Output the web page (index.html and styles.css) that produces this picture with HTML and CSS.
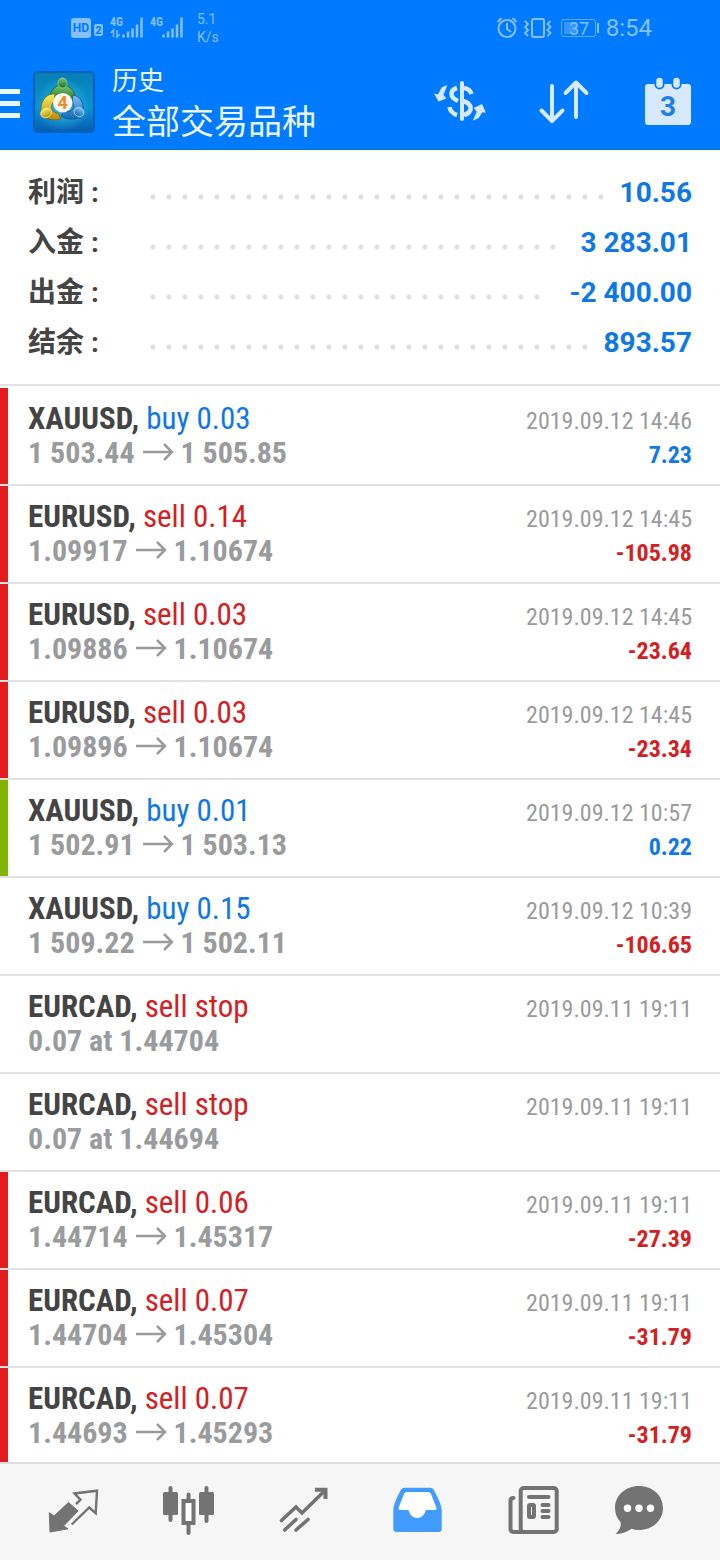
FILE: index.html
```html
<!DOCTYPE html>
<html lang="zh-CN">
<head>
<meta charset="utf-8">
<meta name="viewport" content="width=device-width, initial-scale=1">
<title>历史</title>
<link rel="stylesheet" href="styles.css">
</head>
<body>
<header class="header">
  <div class="status">
    <svg class="status-signal" width="116" height="32" viewBox="0 0 116 32" aria-hidden="true">
      <rect x="1" y="6" width="20" height="20" rx="3" fill="currentColor"/>
      <text x="11" y="20" class="hd">HD</text>
      <rect x="24" y="12" width="9" height="12" rx="2" fill="currentColor"/>
      <text x="28.500" y="22" class="sim">2</text>
      <text x="40" y="14" class="net">4G</text>
      <path d="M43.500 25v-7l-2.500 3M47 18v7l3-3" fill="none" stroke="currentColor" stroke-width="1.500"/>
      <path d="M53.500 25v-3M58 25v-6M62.500 25V16M67 25V12M71.500 25V5" transform="translate(0 .5)" fill="none" stroke="currentColor" stroke-width="2.500"/>
      <text x="80" y="14" class="net">4G</text>
      <path d="M93.500 25v-3M98 25v-6M102.500 25V16M107 25V12M111.500 25V5" transform="translate(0 .5)" fill="none" stroke="currentColor" stroke-width="2.500"/>
    </svg>
    <div class="speed"><span>5.1</span><span>K/s</span></div>
    <div class="status-right">
      <svg width="104" height="24" viewBox="0 0 104 24" fill="none" stroke="currentColor" aria-hidden="true">
        <circle cx="12" cy="12.500" r="8.500" stroke-width="2"/>
        <path d="M12 7v6l4 3M2.500 6l4-4M17.500 2l4 4" stroke-width="2"/>
        <rect x="37" y="3" width="12" height="18" rx="2" stroke-width="2"/>
        <path d="M30 5l3 3-3 3 3 3-3 3 3 3M55.500 5l-3 3 3 3-3 3 3 3-3 3" stroke-width="1.800"/>
        <rect x="66.500" y="3.500" width="34" height="17" rx="2" stroke-width="1" opacity=".7"/>
        <rect x="69" y="6" width="12" height="12" fill="currentColor" stroke="none" opacity=".4"/>
        <path d="M103 7v10" stroke-width="2"/>
        <text x="84" y="19" class="battery">37</text>
      </svg>
      <span class="clock">8:54</span>
    </div>
  </div>
  <div class="toolbar">
    <button class="icon-button menu" aria-label="菜单"><span class="menu-line"></span><span class="menu-line"></span><span class="menu-line"></span></button>
    <svg class="logo" width="62" height="62" viewBox="0 0 62 62" aria-hidden="true">
      <defs>
        <linearGradient id="tile" x1="0" y1="0" x2="0" y2="1"><stop offset="0" stop-color="#087fb4"/><stop offset=".6" stop-color="#0b8fd2"/><stop offset="1" stop-color="#075cae"/></linearGradient>
        <radialGradient id="glow"><stop offset="0" stop-color="#35d2f5" stop-opacity=".8"/><stop offset="1" stop-color="#35d2f5" stop-opacity="0"/></radialGradient>
        <linearGradient id="green" x1="0" y1="0" x2="0" y2="1"><stop offset="0" stop-color="#7cc46a"/><stop offset="1" stop-color="#12702a"/></linearGradient>
        <linearGradient id="gold" x1="0" y1="0" x2="0" y2="1"><stop offset="0" stop-color="#f7ee63"/><stop offset="1" stop-color="#b78a0a"/></linearGradient>
        <linearGradient id="blue" x1="0" y1="0" x2="0" y2="1"><stop offset="0" stop-color="#7cc3f4"/><stop offset="1" stop-color="#1467b4"/></linearGradient>
      </defs>
      <rect x="1" y="1" width="60" height="60" rx="4" fill="url(#tile)" stroke="#0a62b8" stroke-width="2"/>
      <circle cx="30" cy="34" r="27" fill="url(#glow)"/>
      <path d="M17 31C15 22 21 14 29 14s15 7 13 17l-6-2c0-9-13-9-14 0z" fill="url(#green)" stroke="#185f35" stroke-width=".8"/>
      <path d="M22 23C14 22 8 29 8 38c0 8 9 13 20 10l-3-6c-6 0-9-6-4-12z" fill="url(#gold)" stroke="#6d6518" stroke-width=".8"/>
      <path d="M40 24c7 1 11 8 10 15-1 9-13 12-22 6l3-5c7 3 12-3 8-10z" fill="url(#blue)" stroke="#164f85" stroke-width=".8"/>
      <ellipse cx="29.500" cy="12" rx="4.500" ry="5" fill="url(#green)" stroke="#a5d894" stroke-width=".7"/>
      <ellipse cx="13" cy="42" rx="5.500" ry="4.500" fill="url(#gold)" stroke="#fff3a8" stroke-width=".7" transform="rotate(-25 13 42)"/>
      <ellipse cx="46" cy="41" rx="5" ry="4.500" fill="url(#blue)" stroke="#c6e6ff" stroke-width=".7" transform="rotate(25 46 41)"/>
      <circle cx="29.700" cy="31.700" r="9.700" fill="#fff8ef"/>
      <text x="29.700" y="38" class="logo-digit">4</text>
    </svg>
    <div class="titles">
      <h1 class="title">历史</h1>
      <div class="subtitle">全部交易品种</div>
    </div>
    <div class="actions">
      <button class="icon-button" aria-label="交易品种">
        <svg width="52" height="52" viewBox="0 0 52 52" fill="none" stroke="currentColor" stroke-width="4.500">
          <path d="M28 7v36" stroke-width="4" stroke-linecap="round"/>
          <path d="M23 12C16 14 15 21 24 25M30 12Q36 13 37.500 18M29 25C39 28 39 36 30 39M15.500 31Q16.500 37 23 39"/>
          <path d="M13.300 9L9.500 19l3 3.500L4.500 25.500 0 17.500l4 1 3.500-7zM38.700 44.700l4-9-3-3.700 8.300-4 4 8.700-3.700-.4-3.600 5.700z" fill="currentColor" stroke="none"/>
        </svg>
      </button>
      <button class="icon-button" aria-label="排序">
        <svg width="52" height="52" viewBox="0 0 52 52" fill="none" stroke="currentColor" stroke-width="4" stroke-linecap="round" stroke-linejoin="round">
          <path d="M14 10v35M3.500 34.500L14 45l10.500-10.500M38 41V6.500M27.500 17L38 6.500 48.500 17"/>
        </svg>
      </button>
      <button class="icon-button" aria-label="日期">
        <svg width="52" height="52" viewBox="0 0 52 52">
          <rect x="3" y="8" width="46" height="41" rx="3" fill="currentColor"/>
          <path d="M17.500 6v2.500M34.500 6v2.500" stroke="#007aff" stroke-width="10" stroke-linecap="round"/>
          <path d="M17.500 5v3.500M34.500 5v3.500" stroke="currentColor" stroke-width="6.500" stroke-linecap="round"/>
          <text x="26" y="40" class="calendar-digit">3</text>
        </svg>
      </button>
    </div>
  </div>
</header>

<main class="content">
  <dl class="summary">
    <div class="summary-row"><dt>利润 :</dt><dd class="dots" aria-hidden="true"></dd><dd class="total">10.56</dd></div>
    <div class="summary-row"><dt>入金 :</dt><dd class="dots" aria-hidden="true"></dd><dd class="total">3 283.01</dd></div>
    <div class="summary-row"><dt>出金 :</dt><dd class="dots" aria-hidden="true"></dd><dd class="total">-2 400.00</dd></div>
    <div class="summary-row"><dt>结余 :</dt><dd class="dots" aria-hidden="true"></dd><dd class="total">893.57</dd></div>
  </dl>
  <ul class="deals">
    <li class="deal loss"><div class="line"><span class="symbol">XAUUSD, <span class="buy">buy 0.03</span></span><time class="date">2019.09.12 14:46</time></div><div class="line"><span class="price">1 503.44 <svg class="arrow" width="32" height="18" viewBox="0 0 32 18"><path d="M1 9h29M22 1l8 8-8 8"/></svg> 1 505.85</span><span class="profit buy">7.23</span></div></li>
    <li class="deal loss"><div class="line"><span class="symbol">EURUSD, <span class="sell">sell 0.14</span></span><time class="date">2019.09.12 14:45</time></div><div class="line"><span class="price">1.09917 <svg class="arrow" width="32" height="18" viewBox="0 0 32 18"><path d="M1 9h29M22 1l8 8-8 8"/></svg> 1.10674</span><span class="profit sell">-105.98</span></div></li>
    <li class="deal loss"><div class="line"><span class="symbol">EURUSD, <span class="sell">sell 0.03</span></span><time class="date">2019.09.12 14:45</time></div><div class="line"><span class="price">1.09886 <svg class="arrow" width="32" height="18" viewBox="0 0 32 18"><path d="M1 9h29M22 1l8 8-8 8"/></svg> 1.10674</span><span class="profit sell">-23.64</span></div></li>
    <li class="deal loss"><div class="line"><span class="symbol">EURUSD, <span class="sell">sell 0.03</span></span><time class="date">2019.09.12 14:45</time></div><div class="line"><span class="price">1.09896 <svg class="arrow" width="32" height="18" viewBox="0 0 32 18"><path d="M1 9h29M22 1l8 8-8 8"/></svg> 1.10674</span><span class="profit sell">-23.34</span></div></li>
    <li class="deal gain"><div class="line"><span class="symbol">XAUUSD, <span class="buy">buy 0.01</span></span><time class="date">2019.09.12 10:57</time></div><div class="line"><span class="price">1 502.91 <svg class="arrow" width="32" height="18" viewBox="0 0 32 18"><path d="M1 9h29M22 1l8 8-8 8"/></svg> 1 503.13</span><span class="profit buy">0.22</span></div></li>
    <li class="deal"><div class="line"><span class="symbol">XAUUSD, <span class="buy">buy 0.15</span></span><time class="date">2019.09.12 10:39</time></div><div class="line"><span class="price">1 509.22 <svg class="arrow" width="32" height="18" viewBox="0 0 32 18"><path d="M1 9h29M22 1l8 8-8 8"/></svg> 1 502.11</span><span class="profit sell">-106.65</span></div></li>
    <li class="deal"><div class="line"><span class="symbol">EURCAD, <span class="sell">sell stop</span></span><time class="date">2019.09.11 19:11</time></div><div class="line"><span class="price">0.07 at 1.44704</span></div></li>
    <li class="deal"><div class="line"><span class="symbol">EURCAD, <span class="sell">sell stop</span></span><time class="date">2019.09.11 19:11</time></div><div class="line"><span class="price">0.07 at 1.44694</span></div></li>
    <li class="deal loss"><div class="line"><span class="symbol">EURCAD, <span class="sell">sell 0.06</span></span><time class="date">2019.09.11 19:11</time></div><div class="line"><span class="price">1.44714 <svg class="arrow" width="32" height="18" viewBox="0 0 32 18"><path d="M1 9h29M22 1l8 8-8 8"/></svg> 1.45317</span><span class="profit sell">-27.39</span></div></li>
    <li class="deal loss"><div class="line"><span class="symbol">EURCAD, <span class="sell">sell 0.07</span></span><time class="date">2019.09.11 19:11</time></div><div class="line"><span class="price">1.44704 <svg class="arrow" width="32" height="18" viewBox="0 0 32 18"><path d="M1 9h29M22 1l8 8-8 8"/></svg> 1.45304</span><span class="profit sell">-31.79</span></div></li>
    <li class="deal loss"><div class="line"><span class="symbol">EURCAD, <span class="sell">sell 0.07</span></span><time class="date">2019.09.11 19:11</time></div><div class="line"><span class="price">1.44693 <svg class="arrow" width="32" height="18" viewBox="0 0 32 18"><path d="M1 9h29M22 1l8 8-8 8"/></svg> 1.45293</span><span class="profit sell">-31.79</span></div></li>
  </ul>
</main>

<nav class="tabs">
  <a class="tab" href="#quotes" aria-label="行情">
    <svg width="64" height="64" viewBox="0 0 64 64">
      <path d="M8.300 32.700L13 36 27.500 22.500 37 31 22.500 46l4.500 2.800L9 52z" fill="currentColor" stroke="currentColor" stroke-linejoin="round"/>
      <path d="M35 24l4.500-4.200-6-6.300L56 10.700l-1.300 22.600-6.400-5.800-17.600 17" fill="none" stroke="currentColor" stroke-width="2.400"/>
    </svg>
  </a>
  <a class="tab" href="#charts" aria-label="图表">
    <svg width="64" height="64" viewBox="0 0 64 64" fill="currentColor">
      <rect x="7" y="12" width="15" height="23" rx="1.500"/><rect x="43" y="12" width="15" height="23" rx="1.500"/>
      <path d="M14.500 8v32M50.500 8v33M32.500 14.500V20M32.500 44v9" stroke="currentColor" stroke-width="4" stroke-linecap="round"/>
      <rect x="27.500" y="21" width="10" height="22" fill="#fff" stroke="currentColor" stroke-width="4"/>
    </svg>
  </a>
  <a class="tab" href="#trade" aria-label="交易">
    <svg width="64" height="64" viewBox="0 0 64 64" fill="none" stroke="currentColor" stroke-width="3.600" stroke-linecap="round">
      <path d="M10.500 40.500L25 27l6 6 23-22.500M13.700 50L25 39.500M25 50l12-10.500"/><path d="M44 9.700h10.500V19" stroke-width="4" stroke-linecap="butt"/>
    </svg>
  </a>
  <a class="tab active" href="#history" aria-label="历史" aria-current="page">
    <svg width="64" height="64" viewBox="0 0 64 64">
      <path d="M20 7.700h25q3 0 4.500 3.300 7.200 14 7.200 19v19q0 3-3 3h-42q-3.400 0-3.400-3V30q0-6 7-19 1.700-3.300 4.700-3.300z" fill="currentColor"/>
      <path d="M21.500 12h21.500q2 0 3 2l5.500 14q.5 2-1.500 2h-9.300a8.700 9.500 0 0 1-17.200 0H15q-2 0-1.500-2l5.500-14q1-2 2.500-2z" fill="#fff"/>
    </svg>
  </a>
  <a class="tab" href="#news" aria-label="新闻">
    <svg width="64" height="64" viewBox="0 0 64 64" fill="none" stroke="currentColor" stroke-width="4" stroke-linecap="round">
      <rect x="20.700" y="8" width="36" height="44" rx="3"/>
      <path d="M13.500 18q-3 0-3 3v28q0 3 4 3h8M29 17h19.500M42.500 25h6M42.500 31h6M42.500 37h6"/>
      <rect x="29" y="25" width="5" height="12" rx="1"/>
    </svg>
  </a>
  <a class="tab" href="#messages" aria-label="消息">
    <svg width="64" height="64" viewBox="0 0 64 64">
      <path d="M24 6c13.500 0 24 9.500 24 22S37.500 50 24 50q-4 0-7.500-1.200Q9 54 .5 54 7 48 5.500 42 0 36 0 28C0 15.500 10.500 6 24 6z" fill="currentColor"/>
      <circle cx="12.500" cy="28.300" r="3.700" fill="#fff"/><circle cx="24" cy="28.300" r="3.700" fill="#fff"/><circle cx="35.500" cy="28.300" r="3.700" fill="#fff"/>
    </svg>
  </a>
</nav>
</body>
</html>
```
FILE: styles.css
```css
* { box-sizing: border-box; }

body {
  margin: 0;
  height: 100vh;
  display: flex;
  flex-direction: column;
  background: #fff;
  color: #444;
  font-family: Roboto, "Noto Sans CJK SC", sans-serif;
}

.header {
  background: #007aff;
  color: #d6e9ff;
  border-bottom: 1px solid #0f70d8;
}

.status {
  display: flex;
  align-items: center;
  height: 54px;
  padding: 1px 68px 0 70px;
  color: #85c1ff;
}
.speed {
  display: flex;
  flex-direction: column;
  margin-left: 11px;
  font-size: 14px;
  line-height: 18px;
}
.status-right {
  display: flex;
  align-items: center;
  gap: 7px;
  margin-left: auto;
}
.clock { font-size: 24px; line-height: 28px; }
.hd { font: bold 12px Roboto, sans-serif; fill: #007aff; text-anchor: middle; }
.sim { font: bold 11px Roboto, sans-serif; fill: #007aff; text-anchor: middle; }
.net { font: bold 12px "Roboto Condensed", Roboto, sans-serif; fill: currentColor; }
.battery { font: 18px Roboto, sans-serif; fill: currentColor; stroke: none; text-anchor: middle; }

.toolbar {
  display: flex;
  align-items: center;
  height: 95px;
  padding-right: 26px;
}
.icon-button {
  display: block;
  padding: 0;
  border: 0;
  background: none;
  color: inherit;
}
.icon-button svg, .logo, .tab svg { display: block; }
.menu {
  display: flex;
  flex-direction: column;
  gap: 7px;
  width: 20px;
  margin-right: 13px;
  padding-top: 4px;
}
.menu-line { height: 5px; background: #e6f7ff; }
.titles {
  flex: 1;
  margin-left: 17px;
  padding-bottom: 4px;
  color: #eaf6ff;
  font-family: "Noto Sans CJK SC", sans-serif;
}
.title { margin: 0; font-size: 26px; font-weight: 400; line-height: 40px; }
.subtitle { font-size: 34px; line-height: 42px; }
.actions { display: flex; gap: 52px; }
.logo-digit { font: bold 18px Roboto, sans-serif; fill: #f08a2c; text-anchor: middle; }
.calendar-digit { font: bold 28px Roboto, sans-serif; fill: #1f7fe8; text-anchor: middle; }

.content {
  flex: 1;
  min-height: 0;
  overflow-y: auto;
  scrollbar-width: none;
}

.summary {
  margin: 0;
  padding: 17px 28px;
  border-bottom: 2px solid #e2e2e2;
  font-size: 28px;
  font-weight: 700;
}
.summary-row {
  display: flex;
  align-items: center;
  height: 50px;
}
.summary-row dt { width: 117px; padding-bottom: 4px; }
.summary-row dd { margin: 0; }
/* Whole 16px tiles only, so that no dot is cut at the right end. */
.summary-row .dots {
  flex: 1;
  display: grid;
  grid-template-columns: repeat(auto-fill, 16px);
  margin-right: 10px;
  padding-top: 10px;
}
.dots::before {
  content: "";
  grid-column: 1 / -1;
  height: 6px;
  background: radial-gradient(circle, #dedede 2px, transparent 3px) 0 0 / 16px 6px;
}
.total { color: #0f78e6; }

.deals { margin: 0; padding: 2px 0 0; list-style: none; }
.deal {
  position: relative;
  padding: 14px 28px;
  border-bottom: 2px solid #e2e2e2;
  font-family: "Roboto Condensed", "Liberation Sans Narrow", Roboto, sans-serif;
}
.loss::before, .gain::before {
  content: "";
  position: absolute;
  inset: 0 auto 0 0;
  width: 8px;
}
.loss::before { background: #e11b1e; }
.gain::before { background: #7fb400; }
.line {
  display: flex;
  justify-content: space-between;
  align-items: baseline;
  height: 34px;
  line-height: 34px;
  white-space: nowrap;
}
.symbol { font-size: 31px; font-weight: 700; }
.symbol span { font-weight: 400; }
.price { font-size: 30px; font-weight: 700; color: #999b9d; }
.arrow { fill: none; stroke: #999b9d; stroke-width: 2.5; vertical-align: 2px; }
.date { font-size: 24px; color: #999b9d; }
.profit { font-size: 24px; font-weight: 700; }
.buy { color: #0f78e6; }
.sell { color: #d32023; }

.tabs {
  display: flex;
  padding: 0 16px;
  border-top: 2px solid #dedede;
  background: #f6f6f6;
}
.tab {
  flex: 1;
  display: flex;
  justify-content: center;
  padding: 16px 0;
  color: #737373;
}
.active { color: #429cff; }
```
